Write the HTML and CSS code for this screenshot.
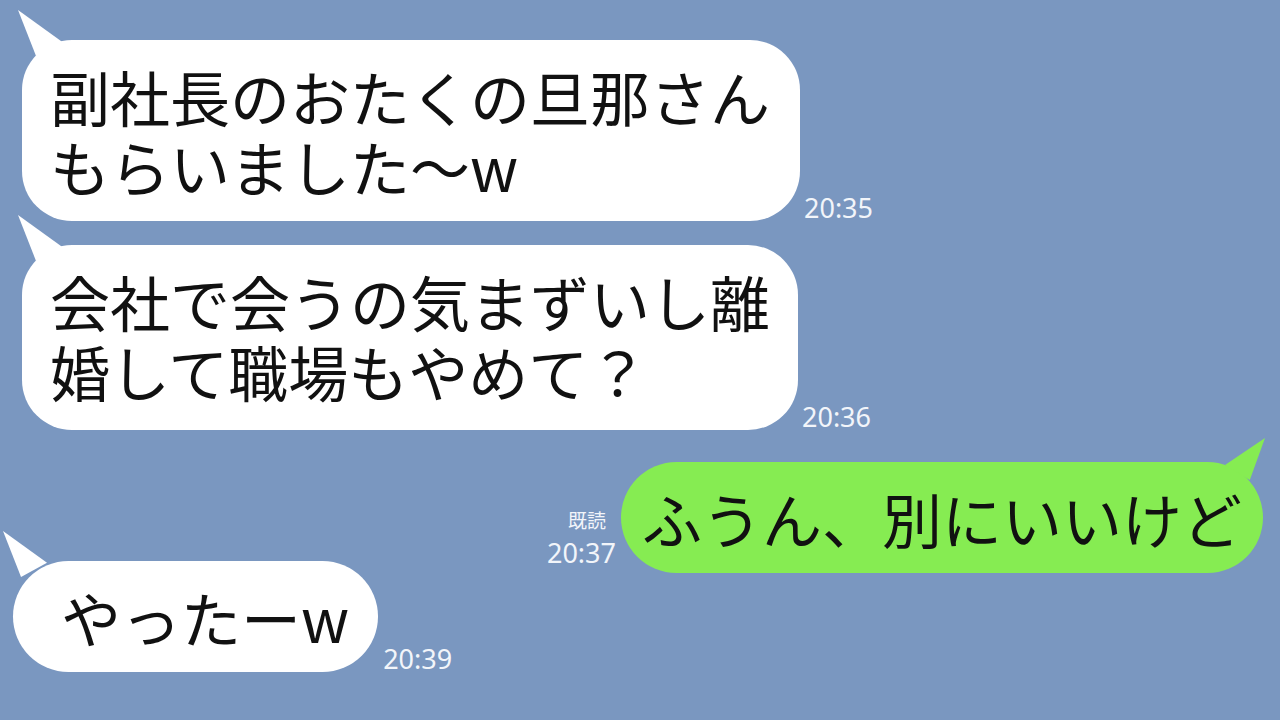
FILE: index.html
```html
<!DOCTYPE html>
<html lang="ja">
<head>
    <meta charset="UTF-8">
    <meta name="viewport" content="width=device-width, initial-scale=1.0">
    <title>トーク</title>
    <link rel="stylesheet" href="styles.css">
</head>
<body>
    <div class="chat">
        <div class="row row-first">
            <div class="bubble">副社長のおたくの旦那さんもらいました〜w</div>
            <div class="meta"><span class="time">20:35</span></div>
        </div>
        <div class="row row-second">
            <div class="bubble bubble-tall">会社で会うの気まずいし離婚して職場もやめて？</div>
            <div class="meta"><span class="time">20:36</span></div>
        </div>
        <div class="row row-mine">
            <div class="meta meta-mine">
                <span class="read">既読</span>
                <span class="time">20:37</span>
            </div>
            <div class="bubble bubble-mine">ふうん、別にいいけど</div>
        </div>
        <div class="row row-last">
            <div class="bubble bubble-short">やったーw</div>
            <div class="meta"><span class="time">20:39</span></div>
        </div>
    </div>
</body>
</html>
```

FILE: styles.css
```css
body {
    margin: 0;
    background-color: #7a97c0;
    font-family: "Noto Sans CJK JP", "Noto Sans", sans-serif;
    color: #111;
}
.chat {
    width: 1280px;
    height: 720px;
    overflow: hidden;
    display: flex;
    flex-direction: column;
    box-sizing: border-box;
    padding-top: 40px;
}
.row {
    display: flex;
    align-items: flex-end;
    gap: 4px;
}
.row-first {
    padding-left: 22px;
}
.row-second {
    margin-top: 24px;
    padding-left: 22px;
}
.row-mine {
    margin-top: 32px;
    justify-content: flex-end;
    padding-right: 17px;
    gap: 5px;
}
.row-last {
    margin-top: -12px;
    padding-left: 13px;
    gap: 5px;
}
.bubble {
    position: relative;
    box-sizing: border-box;
    max-width: 778px;
    padding: 21px 28px 20px;
    background: #fff;
    border-radius: 50px;
    font-size: 60px;
    line-height: 70px;
}
.bubble::before {
    content: "";
    position: absolute;
    left: -4px;
    top: -30px;
    width: 44px;
    height: 46px;
    background: inherit;
    clip-path: polygon(0 0, 100% 69%, 41% 100%);
}
.bubble-tall {
    padding-bottom: 24px;
    max-width: 776px;
}
.bubble-mine {
    background: #86ec52;
    padding: 21px 21px 20px;
    border-radius: 56px;
}
.bubble-mine::before {
    left: auto;
    right: -2px;
    top: -24px;
    width: 40px;
    height: 42px;
    clip-path: polygon(100% 0, 0 64%, 62% 100%);
}
.bubble-short {
    padding: 21px 29px 20px 48px;
    border-radius: 56px;
}
.bubble-short::before {
    left: -10px;
}
.meta {
    display: flex;
    flex-direction: column;
    align-items: flex-end;
    color: #f2f5fa;
    font-family: "Noto Sans", sans-serif;
}
.meta-mine {
    margin-bottom: 7px;
}
.time {
    font-size: 27px;
    line-height: 27px;
}
.read {
    font-family: "Noto Sans CJK JP", sans-serif;
    font-size: 19px;
    line-height: 22px;
    margin: 0 10px 8px 0;
}
```
